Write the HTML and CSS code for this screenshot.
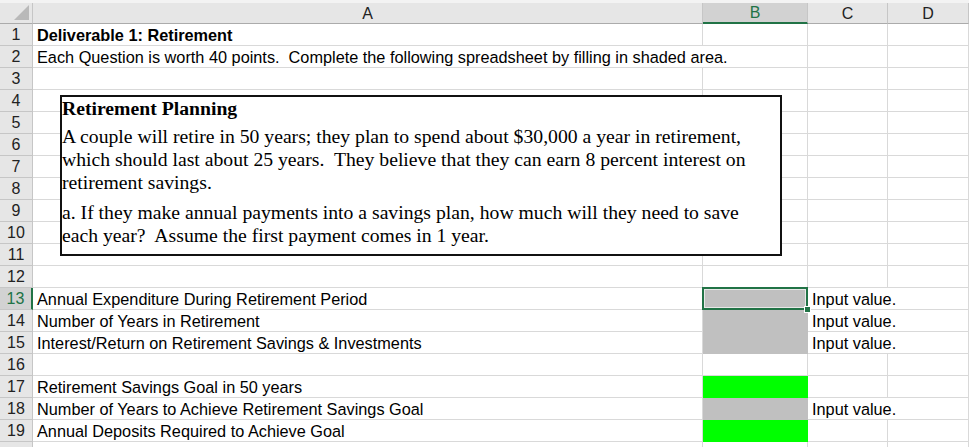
FILE: index.html
```html
<!DOCTYPE html>
<html>
<head>
<meta charset="utf-8">
<link rel="stylesheet" href="styles.css">
</head>
<body>
<div class="sheet">
  <div class="topbar"></div>
  <div class="grid">
    <div class="hdr corner"><span class="tri"></span></div>
    <div class="hdr col">A</div>
    <div class="hdr col sel">B</div>
    <div class="hdr col">C</div>
    <div class="hdr col">D</div>

    <div class="rh">1</div><div class="c bold">Deliverable 1: Retirement</div><div class="c"></div><div class="c"></div><div class="c"></div>
    <div class="rh">2</div><div class="c span2">Each Question is worth 40 points.  Complete the following spreadsheet by filling in shaded area.</div><div class="c"></div><div class="c"></div>
    <div class="rh">3</div><div class="c"></div><div class="c"></div><div class="c"></div><div class="c"></div>
    <div class="rh">4</div><div class="c"></div><div class="c"></div><div class="c"></div><div class="c"></div>
    <div class="rh">5</div><div class="c"></div><div class="c"></div><div class="c"></div><div class="c"></div>
    <div class="rh">6</div><div class="c"></div><div class="c"></div><div class="c"></div><div class="c"></div>
    <div class="rh">7</div><div class="c"></div><div class="c"></div><div class="c"></div><div class="c"></div>
    <div class="rh">8</div><div class="c"></div><div class="c"></div><div class="c"></div><div class="c"></div>
    <div class="rh">9</div><div class="c"></div><div class="c"></div><div class="c"></div><div class="c"></div>
    <div class="rh">10</div><div class="c"></div><div class="c"></div><div class="c"></div><div class="c"></div>
    <div class="rh">11</div><div class="c"></div><div class="c"></div><div class="c"></div><div class="c"></div>
    <div class="rh">12</div><div class="c"></div><div class="c"></div><div class="c"></div><div class="c"></div>
    <div class="rh active">13</div><div class="c">Annual Expenditure During Retirement Period</div><div class="c gray selcell"></div><div class="c span2">Input value.</div>
    <div class="rh">14</div><div class="c">Number of Years in Retirement</div><div class="c gray"></div><div class="c span2">Input value.</div>
    <div class="rh">15</div><div class="c">Interest/Return on Retirement Savings &amp; Investments</div><div class="c gray"></div><div class="c span2">Input value.</div>
    <div class="rh">16</div><div class="c"></div><div class="c"></div><div class="c"></div><div class="c"></div>
    <div class="rh">17</div><div class="c">Retirement Savings Goal in 50 years</div><div class="c green"></div><div class="c"></div><div class="c"></div>
    <div class="rh">18</div><div class="c">Number of Years to Achieve Retirement Savings Goal</div><div class="c gray"></div><div class="c span2">Input value.</div>
    <div class="rh">19</div><div class="c">Annual Deposits Required to Achieve Goal</div><div class="c green"></div><div class="c"></div><div class="c"></div>
    <div class="rh"></div><div class="c"></div><div class="c"></div><div class="c"></div><div class="c"></div>
  </div>

  <div class="textbox">
    <p class="tb-title">Retirement Planning</p>
    <p class="tb-p">A couple will retire in 50 years; they plan to spend about $30,000 a year in retirement,<br>which should last about 25 years.  They believe that they can earn 8 percent interest on<br>retirement savings.</p>
    <p class="tb-p tb-p2">a. If they make annual payments into a savings plan, how much will they need to save<br>each year?  Assume the first payment comes in 1 year.</p>
  </div>
</div>
</body>
</html>
```

FILE: styles.css
```css
html, body {
  margin: 0;
  padding: 0;
  background: #ffffff;
  overflow: hidden;
}

.sheet {
  position: relative;
  width: 969px;
  height: 447px;
  overflow: hidden;
  font-family: "Liberation Sans", Arial, sans-serif;
  font-size: 16.3px;
  color: #000;
}

.topbar {
  height: 3px;
  background: #f3f3f3;
}

.grid {
  display: grid;
  grid-template-columns: 33px 670px 105px 80px 81px;
  grid-template-rows: 21px repeat(20, 22px);
}

.hdr {
  box-sizing: border-box;
  background: #e6e6e6;
  border-right: 1px solid #c6c6c6;
  border-bottom: 1px solid #ababab;
  display: flex;
  align-items: center;
  justify-content: center;
  color: #222;
  font-size: 16px;
  padding-top: 1px;
}

.corner {
  position: relative;
  border-right: 1px solid #c6c6c6;
}

.tri {
  position: absolute;
  right: 3px;
  bottom: 3px;
  width: 0;
  height: 0;
  border-left: 15px solid transparent;
  border-bottom: 15px solid #b9b9b9;
}

.hdr.sel {
  background: #d2d2d2;
  color: #217346;
  border-bottom: 2px solid #217346;
}

.rh {
  box-sizing: border-box;
  background: #e6e6e6;
  border-right: 1px solid #c6c6c6;
  border-bottom: 1px solid #c6c6c6;
  display: flex;
  align-items: flex-end;
  justify-content: center;
  color: #222;
  font-size: 16px;
  line-height: 18px;
  padding-bottom: 1px;
}

.rh.active {
  background: #d2d2d2;
  color: #217346;
  border-right: 2px solid #217346;
}

.c {
  box-sizing: border-box;
  border-right: 1px solid #d9d9d9;
  border-bottom: 1px solid #d9d9d9;
  padding: 0 3px 1px 4px;
  display: flex;
  align-items: flex-end;
  white-space: pre;
  overflow: visible;
  line-height: 18px;
}

.span2 {
  grid-column: span 2;
}

.bold {
  font-weight: bold;
}

.gray {
  background: #c0c0c0;
  border-right-color: #c0c0c0;
  border-bottom-color: #c0c0c0;
}

.green {
  background: #00ff00;
  border-right-color: #00ff00;
  border-bottom-color: #00ff00;
}

.selcell {
  position: relative;
}

.selcell::before {
  content: "";
  position: absolute;
  top: -1px;
  left: -1px;
  right: -1px;
  bottom: -1px;
  border: 2px solid #217346;
  box-shadow: inset 0 0 0 1px #e8e8e8;
}

.selcell::after {
  content: "";
  position: absolute;
  right: -4px;
  bottom: -4px;
  width: 5px;
  height: 5px;
  background: #217346;
  border: 1px solid #ffffff;
}

.textbox {
  position: absolute;
  left: 60px;
  top: 95px;
  width: 722px;
  height: 161px;
  box-sizing: border-box;
  background: #ffffff;
  border: 2px solid #111;
  padding: 0;
  font-family: "Liberation Serif", "Times New Roman", serif;
  font-size: 19.7px;
  line-height: 23px;
  color: #000;
}

.tb-title,
.tb-p {
  white-space: pre;
  margin: 0;
}

.tb-title {
  font-weight: bold;
}

.tb-p {
  margin-top: 5px;
}

.tb-p2 {
  margin-top: 7px;
}
```
